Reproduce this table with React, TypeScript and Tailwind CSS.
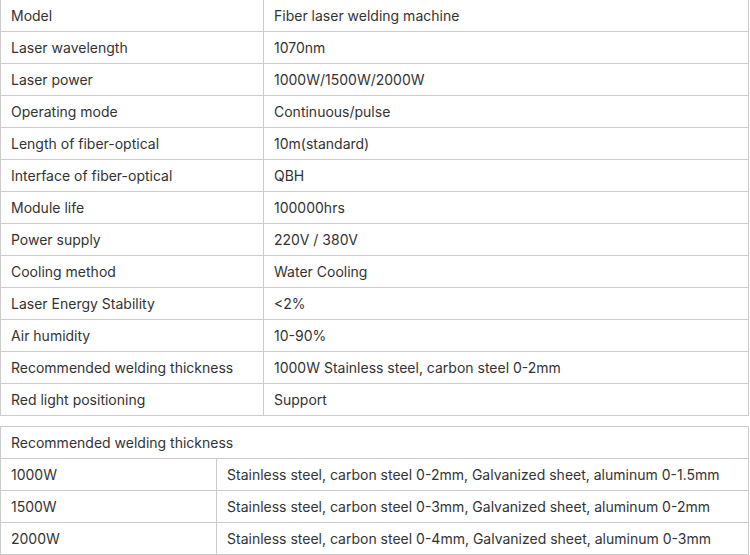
const specs: [string, string][] = [
  ["Model", "Fiber laser welding machine"],
  ["Laser wavelength", "1070nm"],
  ["Laser power", "1000W/1500W/2000W"],
  ["Operating mode", "Continuous/pulse"],
  ["Length of fiber-optical", "10m(standard)"],
  ["Interface of fiber-optical", "QBH"],
  ["Module life", "100000hrs"],
  ["Power supply", "220V / 380V"],
  ["Cooling method", "Water Cooling"],
  ["Laser Energy Stability", "<2%"],
  ["Air humidity", "10-90%"],
  ["Recommended welding thickness", "1000W Stainless steel, carbon steel 0-2mm"],
  ["Red light positioning", "Support"],
];

const thickness: [string, string][] = [
  ["1000W", "Stainless steel, carbon steel 0-2mm, Galvanized sheet, aluminum 0-1.5mm"],
  ["1500W", "Stainless steel, carbon steel 0-3mm, Galvanized sheet, aluminum 0-2mm"],
  ["2000W", "Stainless steel, carbon steel 0-4mm, Galvanized sheet, aluminum 0-3mm"],
];

const cell = "border border-[#cccccc] px-[10px] h-[32px] p-0 align-middle";

export default function App() {
  return (
    <div className="w-[750px] h-[555px] overflow-hidden bg-white text-[14px] text-[#333333] font-['Inter','Liberation_Sans',sans-serif]">
      <table className="w-[749px] -mt-px border-collapse table-fixed">
        <colgroup>
          <col className="w-[263px]" />
          <col />
        </colgroup>
        <tbody>
          {specs.map(([k, v]) => (
            <tr key={k}>
              <td className={cell}>{k}</td>
              <td className={cell}>{v}</td>
            </tr>
          ))}
        </tbody>
      </table>

      <table className="w-[749px] mt-[10px] border-collapse table-fixed">
        <colgroup>
          <col className="w-[216px]" />
          <col />
        </colgroup>
        <tbody>
          <tr>
            <td colSpan={2} className={cell}>Recommended welding thickness</td>
          </tr>
          {thickness.map(([k, v]) => (
            <tr key={k}>
              <td className={cell}>{k}</td>
              <td className={cell}>{v}</td>
            </tr>
          ))}
        </tbody>
      </table>
    </div>
  );
}
